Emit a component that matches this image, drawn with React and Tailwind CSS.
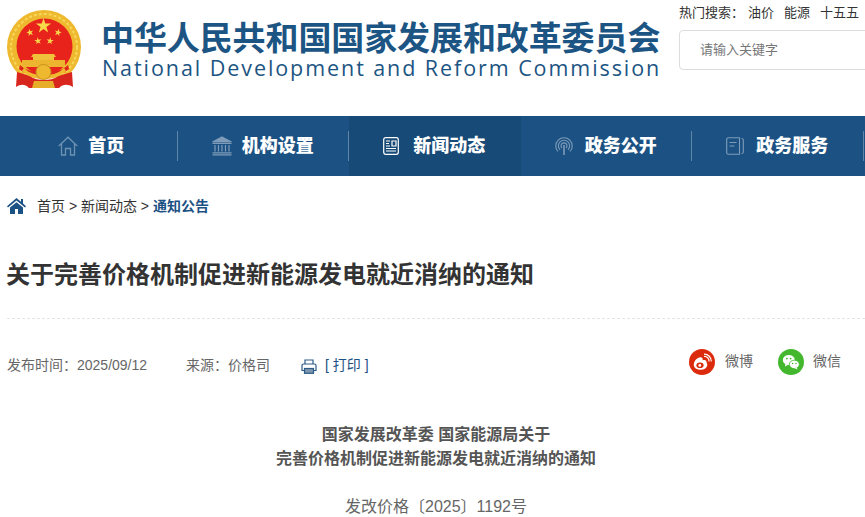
const cjk = '"Liberation Sans", "Noto Sans CJK SC", sans-serif'

function starPoints(cx, cy, r, rot = 0) {
  const pts = []
  for (let i = 0; i < 10; i++) {
    const rad = i % 2 === 0 ? r : r * 0.382
    const a = (-90 + rot + i * 36) * (Math.PI / 180)
    pts.push(`${(cx + rad * Math.cos(a)).toFixed(2)},${(cy + rad * Math.sin(a)).toFixed(2)}`)
  }
  return pts.join(' ')
}

function Emblem() {
  return (
    <svg width="88" height="100" viewBox="0 0 88 100" className="flex-none">
      <clipPath id="ring-clip">
        <rect x="0" y="0" width="88" height="77" />
      </clipPath>
      <g clipPath="url(#ring-clip)">
        <circle cx="44" cy="47" r="37" fill="#eeb92e" />
        <circle cx="44" cy="47" r="33" fill="none" stroke="#f8d65a" strokeWidth="2" strokeDasharray="3 2" />
      </g>
      <circle cx="44.5" cy="46.5" r="28" fill="#e8231c" />
      <polygon points={starPoints(43.5, 26, 8)} fill="#f9d84a" />
      <polygon points={starPoints(30, 32.5, 3.8, -15)} fill="#f9d84a" />
      <polygon points={starPoints(58, 32.5, 3.8, 15)} fill="#f9d84a" />
      <polygon points={starPoints(38, 41, 3.8, -8)} fill="#f9d84a" />
      <polygon points={starPoints(50, 41, 3.8, 8)} fill="#f9d84a" />
      <path d="M33 54 L54 54 L56 57 L54 57 L54 60 L33 60 L33 57 L31 57 Z" fill="#f0c13a" />
      <rect x="22" y="60" width="43" height="7" fill="#edb52f" />
      <path d="M20 65 C26 71 34 72 40 72 L48 72 C54 72 62 71 68 65 L69 69 C62 75 54 76 44 76 C34 76 26 75 19 69 Z" fill="#e0241c" />
      <path d="M17 72 L30 76 C34 79 39 80 44 80 C49 80 54 79 58 76 L72 72 L73 87 C68 84 63 84 59 88 L29 88 C25 84 21 84 16 87 Z" fill="#d8261f" />
      <path d="M24 68 C30 74 36 75 44 75 C52 75 58 74 64 68 L66 71 C58 78 52 79 44 79 C36 79 30 78 22 71 Z" fill="#efba30" />
      <circle cx="43.5" cy="72" r="7.5" fill="#eeb92e" stroke="#c98f1e" strokeWidth="1" />
      <path d="M34 81 L53 81 L55 88 L32 88 Z" fill="#e7ae2a" />
    </svg>
  )
}

function HomeOutline() {
  return (
    <svg width="20" height="20" viewBox="0 0 20 20" fill="none" stroke="#6f92b3" strokeWidth="1.3">
      <path d="M0.8 10 L10 1.2 L19.2 10 M3.5 8 V19 H7.5 V12.5 H12.5 V19 H16.5 V8" />
    </svg>
  )
}

function BankIcon() {
  return (
    <svg width="20" height="20" viewBox="0 0 20 20" fill="none" stroke="#7e9cb9" strokeWidth="1.2">
      <path d="M10 1 L19.5 6 H0.5 Z" fill="#7e9cb9" />
      <path d="M0.5 7.5 H19.5 M0.5 18.8 H19.5 M0.5 16.8 H19.5 M3 9 V15.5 M6.5 9 V15.5 M10 9 V15.5 M13.5 9 V15.5 M17 9 V15.5" />
    </svg>
  )
}

function NewsIcon() {
  return (
    <svg width="16" height="18" viewBox="0 0 16 18" fill="none" stroke="#fff" strokeWidth="1.2">
      <rect x="0.7" y="0.7" width="14.6" height="16.6" rx="2" />
      <path d="M3 4 H7 M3 6.5 H6 M3 9 H7 M9 4 H13 V9 H9 Z M3 11.5 H13 M3 14 H13" />
    </svg>
  )
}

function SignalIcon() {
  return (
    <svg width="18" height="18" viewBox="0 0 18 18" fill="none" stroke="#7e9cb9" strokeWidth="1.1">
      <path d="M3 14.5 A8.2 8.2 0 1 1 15 14.5 M5 12.8 A5.6 5.6 0 1 1 13 12.8 M6.9 11 A3 3 0 1 1 11.1 11" />
      <path d="M9 8 V18" strokeWidth="1.6" />
    </svg>
  )
}

function BookIcon() {
  return (
    <svg width="18" height="18" viewBox="0 0 18 18" fill="none" stroke="#7e9cb9" strokeWidth="1.1">
      <path d="M2.5 0.7 H13.5 V17.3 H2.5 A1.8 1.8 0 0 1 0.7 15.5 V2.5 A1.8 1.8 0 0 1 2.5 0.7 Z" />
      <path d="M15.5 1.5 A1.5 1.5 0 0 1 17.3 3 V15 A1.5 1.5 0 0 1 15.5 16.5 M3.5 5.5 H10.5 M3.5 9 H8.5" />
    </svg>
  )
}

function CrumbHome() {
  return (
    <svg width="19" height="16" viewBox="0 0 19 16" fill="#1c5183">
      <path d="M9.5 0 L14 3.8 V1 H16 V5.5 L19 8.2 L18 9.4 L9.5 2.4 L1 9.4 L0 8.2 Z" />
      <path d="M3 9.6 L9.5 4.3 L16 9.6 V16 H11 V11 H8 V16 H3 Z" />
    </svg>
  )
}

function PrinterIcon() {
  return (
    <svg width="16" height="15" viewBox="0 0 16 15" fill="none" stroke="#2a5b8a" strokeWidth="1.2">
      <path d="M4 5 V1 H12 V5 M3.5 11.5 H1 V6.5 A1.5 1.5 0 0 1 2.5 5 H13.5 A1.5 1.5 0 0 1 15 6.5 V11.5 H12.5" />
      <rect x="3.5" y="9.5" width="9" height="4.8" fill="#7f96ac" />
    </svg>
  )
}

function WeiboIcon() {
  return (
    <svg width="26" height="26" viewBox="0 0 26 26">
      <circle cx="13" cy="13" r="13" fill="#dc2a0c" />
      <ellipse cx="11.5" cy="16" rx="6.8" ry="4.8" fill="#fff" />
      <path d="M5 15 C5 11 10 7.5 12.5 8.5 C14 9 13.8 10.5 13.5 11.5 C16 10.5 18 11.5 17.5 14" fill="#fff" />
      <ellipse cx="11" cy="16.3" rx="3.6" ry="2.8" fill="#dc2a0c" />
      <circle cx="10.8" cy="16.4" r="1.4" fill="#fff" />
      <path d="M15 7.5 A4.5 4.5 0 0 1 20 12.5 M15 5.2 A7 7 0 0 1 22.3 12.5" fill="none" stroke="#fff" strokeWidth="1.2" />
    </svg>
  )
}

function WechatIcon() {
  return (
    <svg width="26" height="26" viewBox="0 0 26 26">
      <circle cx="13" cy="13" r="13" fill="#43b82f" />
      <ellipse cx="10.8" cy="11" rx="6" ry="5" fill="#fff" />
      <path d="M7.5 14.5 L7 17.5 L10.5 15.5 Z" fill="#fff" />
      <ellipse cx="16.3" cy="15.4" rx="5" ry="4.2" stroke="#43b82f" strokeWidth="0.8" fill="#fff" />
      <path d="M18.5 18.5 L19.5 20.5 L16.5 19.3 Z" fill="#fff" />
      <circle cx="8.8" cy="9.6" r="0.9" fill="#43b82f" />
      <circle cx="12.6" cy="9.6" r="0.9" fill="#43b82f" />
      <circle cx="14.6" cy="14.6" r="0.75" fill="#43b82f" />
      <circle cx="18" cy="14.6" r="0.75" fill="#43b82f" />
    </svg>
  )
}

const navItems = [
  { label: '首页', icon: <HomeOutline />, gap: 'gap-[10px]' },
  { label: '机构设置', icon: <BankIcon />, gap: 'gap-[10px]' },
  { label: '新闻动态', icon: <NewsIcon />, gap: 'gap-[14px]', active: true },
  { label: '政务公开', icon: <SignalIcon />, gap: 'gap-[12px]' },
  { label: '政务服务', icon: <BookIcon />, gap: 'gap-[12px]' },
]

export default function App() {
  return (
    <div className="w-[865px] h-[517px] overflow-hidden bg-white" style={{ fontFamily: cjk }}>
      <header className="h-[116px] flex">
        <div className="w-[95px] flex-none">
          <Emblem />
        </div>
        <div className="w-[582px] flex-none pl-[6px] pt-[22px]">
          <div className="text-[33px] leading-[34px] font-bold text-[#1c5583] whitespace-nowrap tracking-[-0.1px]">
            中华人民共和国国家发展和改革委员会
          </div>
          <div
            className="text-[21.5px] leading-[24px] text-[#1c5583] whitespace-nowrap tracking-[1.93px] pl-[1px]"
            style={{ fontFamily: '"Open Sans", sans-serif' }}
          >
            National Development and Reform Commission
          </div>
        </div>
        <div className="pl-[2px] flex-1 min-w-0 overflow-hidden">
          <div className="flex gap-[9px] whitespace-nowrap text-[13px] leading-[16px] text-[#333] pt-[5px]">
            <span className="pr-[4px]">热门搜索：</span>
            <span className="-ml-[9px]">油价</span>
            <span className="ml-[1px]">能源</span>
            <span className="ml-[1px]">十五五</span>
          </div>
          <div className="mt-[9px] h-[40px] w-[240px] border border-[#ddd] rounded-[4px] flex items-center pl-[20px] text-[13px] text-[#777]">
            请输入关键字
          </div>
        </div>
      </header>

      <nav className="h-[60px] bg-[#1c5283] flex pl-[6px]">
        {navItems.map((item, i) => (
          <div
            key={item.label}
            className={`w-[171.5px] flex-none flex items-center ${item.active ? 'bg-[#174a76]' : ''}`}
          >
            <div className={`flex-1 flex items-center justify-center ${item.gap}`}>
              {item.icon}
              <span className="text-[18px] font-black text-white whitespace-nowrap">{item.label}</span>
            </div>
            <div className={`w-px h-[30px] ${i === 2 ? 'bg-transparent' : 'bg-[#5f86a9]'}`} />
          </div>
        ))}
      </nav>

      <div className="pl-[7px] w-full">
        <div className="h-[60px] flex items-center gap-[11px] text-[14px] text-[#333]">
          <CrumbHome />
          <div className="whitespace-nowrap">
            首页 &gt; 新闻动态 &gt; <span className="font-bold text-[#1c5183]">通知公告</span>
          </div>
        </div>

        <h1 className="text-[24px] leading-[34px] font-bold text-[#333] mt-[22px] -ml-px">
          关于完善价格机制促进新能源发电就近消纳的通知
        </h1>

        <div className="mt-[26px] border-t border-dashed border-[#e5e5e5] h-[86px] flex items-center text-[14px] text-[#666]">
          <span className="w-[179px] mt-[8px]">发布时间：2025/09/12</span>
          <span className="w-[115px] mt-[8px]">来源：价格司</span>
          <span className="w-[24px] mt-[10px]"><PrinterIcon /></span>
          <span className="mt-[8px] text-[#1c5183] w-[364px]">[ 打印 ]</span>
          <div className="w-[89px] flex items-center gap-[10px]">
            <WeiboIcon />
            <span>微博</span>
          </div>
          <div className="flex items-center gap-[9px]">
            <WechatIcon />
            <span>微信</span>
          </div>
        </div>

        <div className="mt-[19px] text-center text-[16px] leading-[24px] font-bold text-[#555]">
          <div>国家发展改革委 国家能源局关于</div>
          <div>完善价格机制促进新能源发电就近消纳的通知</div>
        </div>
        <div className="mt-[24px] text-center text-[16px] leading-[24px] text-[#666]">
          发改价格〔2025〕1192号
        </div>
      </div>
    </div>
  )
}
